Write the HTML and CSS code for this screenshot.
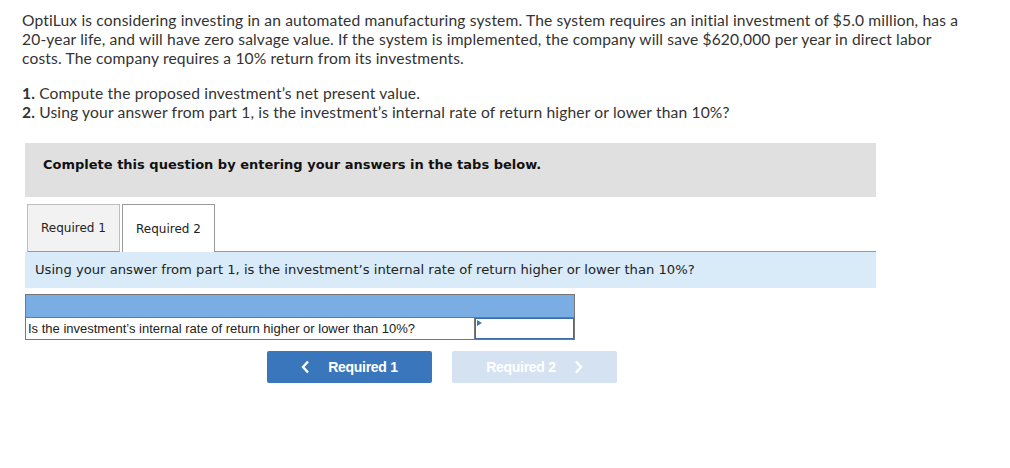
FILE: index.html
```html
<!DOCTYPE html>
<html>
<head>
<meta charset="utf-8">
<link rel="stylesheet" href="styles.css">
</head>
<body>
<div class="page">
  <div class="intro">
    <p class="para">OptiLux is considering investing in an automated manufacturing system. The system requires an initial investment of $5.0 million, has a 20-year life, and will have zero salvage value. If the system is implemented, the company will save $620,000 per year in direct labor costs. The company requires a 10% return from its investments.</p>
    <p class="para"><b>1.</b> Compute the proposed investment’s net present value.<br><b>2.</b> Using your answer from part 1, is the investment’s internal rate of return higher or lower than 10%?</p>
  </div>
  <div class="panel">
    <div class="banner">Complete this question by entering your answers in the tabs below.</div>
    <div class="tabs">
      <div class="tab">Required 1</div>
      <div class="tab active">Required 2</div>
      <div class="tab-fill"></div>
    </div>
    <div class="prompt">Using your answer from part 1, is the investment’s internal rate of return higher or lower than 10%?</div>
    <table class="grid">
      <tr class="head"><td colspan="2"></td></tr>
      <tr>
        <td class="label">Is the investment’s internal rate of return higher or lower than 10%?</td>
        <td class="answer"><span class="flag"></span></td>
      </tr>
    </table>
    <div class="nav">
      <button class="btn prev"><svg class="chev" width="9" height="14" viewBox="0 0 9 14"><path d="M7 1.5 L2 7 L7 12.5" fill="none" stroke="#fff" stroke-width="2.4"/></svg><span>Required 1</span></button>
      <button class="btn next"><span>Required 2</span><svg class="chev" width="9" height="14" viewBox="0 0 9 14"><path d="M2 1.5 L7 7 L2 12.5" fill="none" stroke="#fff" stroke-width="2.4"/></svg></button>
    </div>
  </div>
</div>
</body>
</html>
```
FILE: styles.css
```css
html, body {
  margin: 0;
  padding: 0;
  background: #fff;
}
.page {
  width: 1010px;
}
.intro {
  padding: 11px 0 0 22px;
  width: 942px;
}
.para {
  margin: 0 0 16px 0;
  font-family: "Lato", "Open Sans", sans-serif;
  font-size: 15.6px;
  letter-spacing: 0.15px;
  line-height: 19px;
  color: #333;
}
.para b {
  font-weight: 700;
}
.panel {
  margin-left: 25px;
  width: 851px;
  margin-top: 21px;
}
.banner {
  background: #e0e0e0;
  height: 54px;
  box-sizing: border-box;
  padding: 14px 0 0 18px;
  font-family: "DejaVu Sans", Verdana, sans-serif;
  font-weight: bold;
  font-size: 13px;
  color: #111;
}
.tabs {
  display: flex;
  align-items: flex-end;
  margin-top: 7px;
  height: 48px;
}
.tab {
  box-sizing: border-box;
  height: 48px;
  border: 1px solid #bdbdbd;
  border-bottom: 1px solid #999;
  background: #f2f2f2;
  font-family: "DejaVu Sans", Verdana, sans-serif;
  font-size: 12px;
  color: #222;
  display: flex;
  align-items: center;
  justify-content: center;
  margin-left: 2px;
  width: 93px;
}
.tab.active {
  background: #fff;
  border: 1px solid #999;
  border-bottom: none;
  width: 93px;
}
.tab-fill {
  flex: 1;
  border-bottom: 1px solid #999;
  height: 0;
}
.prompt {
  background: #d9eaf8;
  height: 36px;
  box-sizing: border-box;
  padding: 10px 0 0 10px;
  font-family: "DejaVu Sans", Verdana, sans-serif;
  font-size: 13.15px;
  color: #222;
}
.grid {
  margin-top: 6px;
  border-collapse: collapse;
  width: 550px;
}
.grid td {
  border: 1px solid #777;
  padding: 0;
}
.grid .head td {
  background: #7aade3;
  height: 22px;
}
.grid .label {
  font-family: "Liberation Sans", Arial, sans-serif;
  font-size: 13px;
  color: #222;
  height: 21px;
  padding-left: 2px;
  width: 446px;
}
.grid .answer {
  position: relative;
  box-shadow: inset 0 0 0 1px #3a6fae;
}
.flag {
  position: absolute;
  left: 2px;
  top: 2px;
  width: 0;
  height: 0;
  border-top: 3px solid transparent;
  border-bottom: 3px solid transparent;
  border-left: 5px solid #3a78bd;
}
.nav {
  display: flex;
  gap: 20px;
  margin: 11px 0 0 242px;
}
.btn {
  width: 165px;
  height: 32px;
  border: none;
  border-radius: 2px;
  font-family: "Liberation Sans Narrow", "Liberation Sans", Arial, sans-serif;
  font-weight: bold;
  font-size: 14px;
  letter-spacing: -0.3px;
  color: #fff;
  display: flex;
  align-items: center;
  justify-content: center;
  gap: 18px;
  padding: 0;
}
.btn.prev {
  background: #3a76bb;
}
.btn.next {
  background: #d5e2f1;
}
.chev {
  display: block;
}
```
